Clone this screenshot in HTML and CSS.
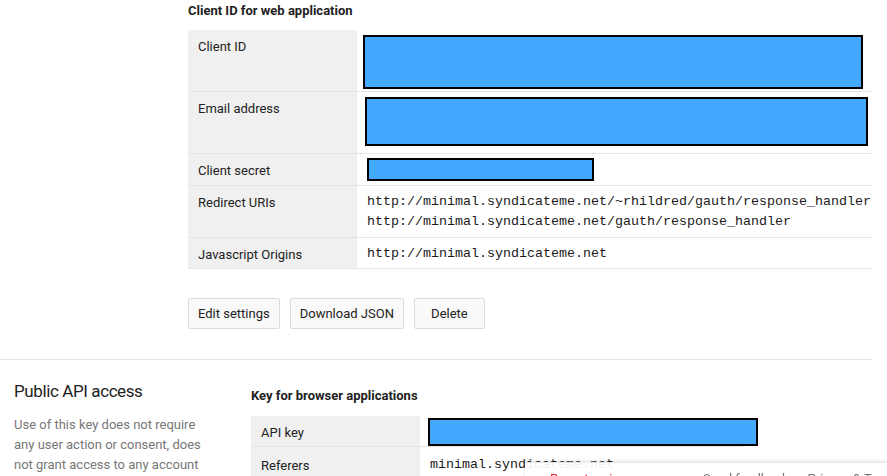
FILE: index.html
```html
<!DOCTYPE html>
<html lang="en">
<head>
<meta charset="utf-8">
<title>Client ID for web application</title>
<link rel="stylesheet" href="styles.css">
</head>
<body>
<main class="page">
  <section class="client-section">
    <h3 class="block-title">Client ID for web application</h3>
    <div class="kv-table">
      <div class="kv-row row-tall">
        <div class="kv-label">Client ID</div>
        <div class="kv-value"><span class="redact redact-id"></span></div>
      </div>
      <div class="kv-row row-tall">
        <div class="kv-label">Email address</div>
        <div class="kv-value"><span class="redact redact-email"></span></div>
      </div>
      <div class="kv-row row-secret">
        <div class="kv-label">Client secret</div>
        <div class="kv-value"><span class="redact redact-secret"></span></div>
      </div>
      <div class="kv-row row-uris">
        <div class="kv-label">Redirect URIs</div>
        <div class="kv-value mono">
          <div>http://minimal.syndicateme.net/~rhildred/gauth/response_handler</div>
          <div>http://minimal.syndicateme.net/gauth/response_handler</div>
        </div>
      </div>
      <div class="kv-row row-single">
        <div class="kv-label">Javascript Origins</div>
        <div class="kv-value mono">http://minimal.syndicateme.net</div>
      </div>
    </div>
    <div class="actions">
      <button class="btn">Edit settings</button>
      <button class="btn">Download JSON</button>
      <button class="btn">Delete</button>
    </div>
  </section>

  <section class="api-section">
    <div class="api-intro">
      <h2 class="api-title">Public API access</h2>
      <p class="api-desc">Use of this key does not require any user action or consent, does not grant access to any account information, and is not used for authorization.</p>
    </div>
    <div class="api-keys">
      <h3 class="block-title">Key for browser applications</h3>
      <div class="kv-table kv-narrow">
        <div class="kv-row row-key">
          <div class="kv-label">API key</div>
          <div class="kv-value"><span class="redact redact-key"></span></div>
        </div>
        <div class="kv-row row-single">
          <div class="kv-label label-low">Referers</div>
          <div class="kv-value mono value-low">minimal.syndicateme.net</div>
        </div>
      </div>
    </div>
  </section>
</main>

<footer class="float-footer">
  <span class="footer-report">Report an issue</span>
  <span class="footer-link">Send feedback</span>
  <span class="footer-link">Privacy &amp; Terms</span>
</footer>
</body>
</html>
```

FILE: styles.css
```css
* { box-sizing: border-box; }

html, body {
  margin: 0;
  padding: 0;
  background: #fff;
}

body {
  font-family: Roboto, "Liberation Sans", Arial, sans-serif;
  font-size: 13px;
  line-height: 18px;
  color: #222;
  overflow: hidden;
}

.page {
  width: 872px;
}

.client-section {
  padding: 2px 0 30px 188px;
  border-bottom: 1px solid #e5e5e5;
}

.block-title {
  margin: 0 0 10px;
  font-size: 13px;
  line-height: 18px;
  font-weight: 700;
  color: #222;
}

.kv-table {
  display: flex;
  flex-direction: column;
}

.kv-row {
  display: grid;
  grid-template-columns: 169px 1fr;
  border-bottom: 1px solid #e5e5e5;
}

.kv-label {
  background: #f0f0f0;
  padding: 8px 10px 0;
}

.kv-value {
  padding: 6px 10px 0;
}

.label-low { padding-top: 10px; }
.value-low { padding-top: 8px; }

.mono {
  font-family: "Liberation Mono", "Courier New", monospace;
  font-size: 13.333px;
  line-height: 20px;
  color: #1a1a1a;
  white-space: nowrap;
}

.row-tall { height: 62px; }
.row-secret { height: 32px; }
.row-uris { height: 52px; }
.row-single { height: 31px; }
.row-key { height: 31px; }

.redact {
  display: block;
  background: #42a9fe;
  border: 2px solid #000;
}

.redact-id {
  width: 500px;
  height: 54px;
  margin: -1px 0 0 -4px;
}

.redact-email {
  width: 503px;
  height: 49px;
  margin: -1px 0 0 -2px;
}

.redact-secret {
  width: 227px;
  height: 23px;
  margin: -2px 0 0 0;
}

.redact-key {
  width: 330px;
  height: 28px;
  margin: -4px 0 0 -2px;
}

.actions {
  display: flex;
  gap: 10px;
  margin-top: 29px;
}

.btn {
  height: 31px;
  min-width: 71px;
  padding: 0 9px;
  font-family: inherit;
  font-size: 13px;
  color: #222;
  background: #f9f9f9;
  border: 1px solid #dcdcdc;
  border-radius: 2px;
  cursor: pointer;
}

.api-section {
  display: grid;
  grid-template-columns: 195px 1fr;
  column-gap: 42px;
  padding: 19px 0 0 14px;
}

.api-title {
  margin: 0 0 12px;
  font-size: 17px;
  letter-spacing: -0.4px;
  line-height: 24px;
  font-weight: 400;
  color: #222;
}

.api-desc {
  margin: 0;
  font-size: 13px;
  line-height: 20px;
  color: #777;
}

.api-keys {
  padding-top: 8px;
}

.api-keys .block-title {
  margin-bottom: 11px;
}

.kv-narrow {
  width: 492px;
}

.float-footer {
  position: fixed;
  left: 525px;
  right: 0;
  top: 462px;
  height: 40px;
  display: flex;
  padding: 7px 0 0 25px;
  background: rgba(255, 255, 255, 0.93);
  border-top: 1px solid rgba(0, 0, 0, 0.08);
  box-shadow: 0 -1px 3px rgba(0, 0, 0, 0.12);
  font-size: 13px;
  line-height: 18px;
  white-space: nowrap;
}

.footer-report {
  flex: 0 0 153px;
  color: #dd2222;
}

.footer-link {
  flex: 0 0 auto;
  color: #777;
  margin-right: 19px;
}
```
